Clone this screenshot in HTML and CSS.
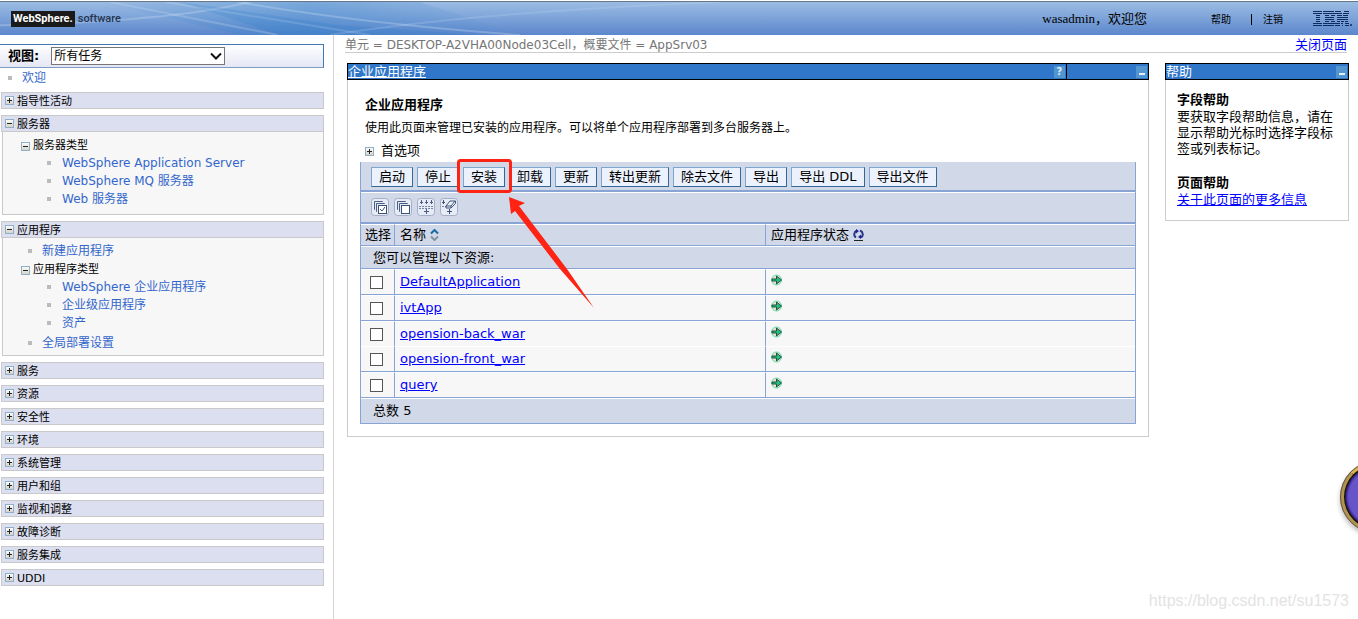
FILE: index.html
```html
<!DOCTYPE html>
<html lang="zh-CN">
<head>
<meta charset="utf-8">
<title>企业应用程序</title>
<link rel="stylesheet" href="styles.css">
</head>
<body>
<svg class="defs" width="0" height="0" aria-hidden="true">
  <defs>
    <linearGradient id="tile" x1="0" y1="0" x2="0" y2="1"><stop offset="0" stop-color="#fff"/><stop offset="1" stop-color="#d5d0c4"/></linearGradient>
    <symbol id="plus" viewBox="0 0 9 9"><rect x=".5" y=".5" width="8" height="8" fill="url(#tile)" stroke="#8fb0c9"/><path d="M2 4.5h5M4.5 2v5" stroke="#222"/></symbol>
    <symbol id="minus" viewBox="0 0 9 9"><rect x=".5" y=".5" width="8" height="8" fill="url(#tile)" stroke="#8fb0c9"/><path d="M2 4.5h5" stroke="#222"/></symbol>
    <symbol id="started" viewBox="0 0 12 12"><circle cx="5.500" cy="6" r="5" fill="#f0dccf" stroke="#5fe0ae"/><path d="M1 5h4.500V2L10.500 6 5.500 10V7H1z" fill="#25bd85" stroke="#23543f"/></symbol>
    <symbol id="frame" viewBox="0 0 18 18"><rect x=".5" y=".5" width="17" height="17" rx="3" fill="#e6ebf5" stroke="#a3afc6"/></symbol>
    <linearGradient id="sweep" x1="0" x2="1"><stop offset="0" stop-color="#2a7cc8" stop-opacity="0"/><stop offset=".5" stop-color="#2a7cc8" stop-opacity=".3"/><stop offset="1" stop-color="#2a7cc8" stop-opacity="0"/></linearGradient>
  </defs>
</svg>

<header class="banner">
  <svg class="banner-art" viewBox="0 0 1358 34" preserveAspectRatio="none" aria-hidden="true">
    <path d="M100 0H420L520 34H240z" fill="url(#sweep)"/>
    <path d="M110 0 278 34M165 0 370 34" stroke="#cfe0f4" stroke-width="2" opacity=".25"/>
    <path d="M0 24Q170 20 250 0" stroke="#cfe0f4" stroke-width="2" fill="none" opacity=".3"/>
    <path d="M180 0 340 24 480 34H280z" fill="#1f78c8" opacity=".18"/>
    <path d="M238 0Q360 22 520 34" stroke="#cfe0f4" stroke-width="2" fill="none" opacity=".3"/>
    <path d="M330 34Q480 10 720 0" stroke="#cfe0f4" stroke-width="2" fill="none" opacity=".2"/>
  </svg>
  <div class="brand"><span class="brand-box">WebSphere.</span><span class="brand-sub">software</span></div>
  <div class="session">
    <span class="welcome">wasadmin，欢迎您</span>
    <a class="top-link" href="#">帮助</a><span class="bar"></span><a class="top-link" href="#">注销</a>
    <svg class="ibm" width="39" height="16" viewBox="0 0 39 16" role="img" aria-label="IBM">
      <g stroke="#0c2c60" stroke-width="1">
        <path d="M0 .5h9M10 .5h11M22 .5h6M31 .5h5"/>
        <path d="M0 2.500h9M10 2.500h12M22 2.500h7M30 2.500h6"/>
        <path d="M3 4.500h4M12 4.500h4M18 4.500h4M24 4.500h5M30 4.500h5"/>
        <path d="M3 6.500h4M12 6.500h9M24 6.500h11"/>
        <path d="M3 8.500h4M12 8.500h9M24 8.500h11"/>
        <path d="M3 10.500h4M12 10.500h4M18 10.500h4M24 10.500h3M28 10.500h3M32 10.500h3"/>
        <path d="M0 12.500h9M10 12.500h12M22 12.500h5M28 12.500h2M32 12.500h4"/>
        <path d="M0 14.500h9M10 14.500h11M22 14.500h5M29 14.500h1M32 14.500h4"/>
      </g>
      <circle cx="38" cy="14" r="1" fill="#0c2c60"/>
    </svg>
  </div>
</header>

<div class="layout">
  <nav class="sidebar">
    <div class="view">
      <label for="view">视图:</label>
      <span class="select-wrap"><select id="view"><option>所有任务</option></select><svg class="chevron" width="12" height="8" viewBox="0 0 12 8"><path d="M1 1.500 6 6.500 11 1.500" fill="none" stroke="#111" stroke-width="2"/></svg></span>
    </div>
    <a class="item top" href="#">欢迎</a>
    <div class="groups">
      <section><h2><svg><use href="#plus"/></svg>指导性活动</h2></section>
      <section><h2><svg><use href="#minus"/></svg>服务器</h2>
        <div class="tree servers">
          <div class="branch"><svg><use href="#minus"/></svg>服务器类型</div>
          <a class="item leaf" href="#">WebSphere Application Server</a>
          <a class="item leaf" href="#">WebSphere MQ 服务器</a>
          <a class="item leaf" href="#">Web 服务器</a>
        </div>
      </section>
      <section><h2><svg><use href="#minus"/></svg>应用程序</h2>
        <div class="tree apps">
          <a class="item twig" href="#">新建应用程序</a>
          <div class="branch"><svg><use href="#minus"/></svg>应用程序类型</div>
          <a class="item leaf" href="#">WebSphere 企业应用程序</a>
          <a class="item leaf" href="#">企业级应用程序</a>
          <a class="item leaf" href="#">资产</a>
          <a class="item twig last" href="#">全局部署设置</a>
        </div>
      </section>
      <section><h2><svg><use href="#plus"/></svg>服务</h2></section>
      <section><h2><svg><use href="#plus"/></svg>资源</h2></section>
      <section><h2><svg><use href="#plus"/></svg>安全性</h2></section>
      <section><h2><svg><use href="#plus"/></svg>环境</h2></section>
      <section><h2><svg><use href="#plus"/></svg>系统管理</h2></section>
      <section><h2><svg><use href="#plus"/></svg>用户和组</h2></section>
      <section><h2><svg><use href="#plus"/></svg>监视和调整</h2></section>
      <section><h2><svg><use href="#plus"/></svg>故障诊断</h2></section>
      <section><h2><svg><use href="#plus"/></svg>服务集成</h2></section>
      <section><h2><svg><use href="#plus"/></svg>UDDI</h2></section>
    </div>
  </nav>

  <main class="content">
    <div class="crumb"><span>单元 = DESKTOP-A2VHA00Node03Cell，概要文件 = AppSrv03</span><a href="#">关闭页面</a></div>
    <div class="columns">
      <section class="portlet">
        <div class="bar-title"><a href="#">企业应用程序</a><button class="chip help" type="button" aria-label="帮助">?</button><span class="split"></span><button class="chip" type="button" aria-label="最小化"><i></i></button></div>
        <div class="portlet-body">
          <h1>企业应用程序</h1>
          <p class="intro">使用此页面来管理已安装的应用程序。可以将单个应用程序部署到多台服务器上。</p>
          <div class="prefs"><svg><use href="#plus"/></svg>首选项</div>
          <div class="grid-box">
            <div class="actions">
              <button type="button">启动</button><button type="button">停止</button>
              <span class="marked"><button type="button">安装</button>
                <svg class="mark" width="140" height="152" viewBox="0 0 140 152" aria-hidden="true">
                  <path d="M52 38 68 44 62 47 110 110 137 149 103 110 58 52 54 55z" fill="#ff2314"/>
                  <rect x="1.500" y="1.500" width="52" height="31" rx="2" fill="none" stroke="#ff2314" stroke-width="3"/>
                </svg></span>
              <button type="button">卸载</button><button type="button">更新</button><button type="button">转出更新</button><button type="button">除去文件</button><button type="button">导出</button><button type="button">导出 DDL</button><button type="button">导出文件</button>
            </div>
            <div class="tools">
              <button type="button" aria-label="全部选中"><svg viewBox="0 0 18 18"><use href="#frame"/><path d="M4 11.500H3.500V3.500h8V4M6 13.500H5.500V5.500h8V6" fill="none" stroke="#4b5d80"/><rect x="7.500" y="7.500" width="8" height="8" fill="#fff" stroke="#3d5076"/><path d="M9 11l2 2 3-4" fill="none" stroke="#3d5076"/></svg></button>
              <button type="button" aria-label="全部取消选中"><svg viewBox="0 0 18 18"><use href="#frame"/><path d="M4 11.500H3.500V3.500h8V4M6 13.500H5.500V5.500h8V6" fill="none" stroke="#4b5d80"/><rect x="7.500" y="7.500" width="8" height="8" fill="#fff" stroke="#3d5076"/></svg></button>
              <button type="button" aria-label="显示过滤器"><svg viewBox="0 0 18 18"><use href="#frame"/><path d="M4.500 2v4M9.500 2v4M14.500 2v4M9.500 11v5M3 4.500h3M8 4.500h3M13 4.500h3M7 13.500h5" stroke="#4b5d80"/><path d="M2 8.500h14M2 10.500h14" stroke="#7587a5" stroke-dasharray="2 1"/></svg></button>
              <button type="button" aria-label="清除过滤器"><svg viewBox="0 0 18 18"><use href="#frame"/><path d="M3.500 2v4M2 4.500h3M9.500 11v5M7 13.500h5" stroke="#3d5076"/><path d="M2 8.500h5" stroke="#7587a5" stroke-dasharray="2 1"/><path d="M6 8 10 3h5.500v2.500L11 10H6zM6 8h5l4-5M11 8v2" fill="#f4f6fa" stroke="#3d5076"/></svg></button>
            </div>
            <table>
              <thead>
                <tr><th class="c-sel">选择</th><th class="c-name">名称 <svg width="9" height="12" viewBox="0 0 9 12"><path d="M1 4.500 4.500 1 8 4.500" fill="none" stroke="#1769a0" stroke-width="2"/><path d="M1 7.500 4.500 11 8 7.500" fill="none" stroke="#8292a5" stroke-width="2"/></svg></th><th>应用程序状态 <svg width="11" height="12" viewBox="0 0 11 12"><path d="M4 1.500C.5 3 .5 7 3 8.500M7 1.500C10.500 3 10.500 7 8 8.500" fill="none" stroke="#263585" stroke-width="2"/><path d="M3 0 6 2 3 4.500zM8 5.500 5 8 8 10z" fill="#20209a"/><path d="M1 11.500h9" stroke="#222"/></svg></th></tr>
                <tr class="note"><td colspan="3">您可以管理以下资源:</td></tr>
              </thead>
              <tbody>
                <tr><td><input type="checkbox" aria-label="DefaultApplication"></td><td><a href="#">DefaultApplication</a></td><td><svg class="state"><use href="#started"/></svg></td></tr>
                <tr><td><input type="checkbox" aria-label="ivtApp"></td><td><a href="#">ivtApp</a></td><td><svg class="state"><use href="#started"/></svg></td></tr>
                <tr class="open"><td><input type="checkbox" aria-label="opension-back_war"></td><td><a href="#">opension-back_war</a></td><td><svg class="state"><use href="#started"/></svg></td></tr>
                <tr><td><input type="checkbox" aria-label="opension-front_war"></td><td><a href="#">opension-front_war</a></td><td><svg class="state"><use href="#started"/></svg></td></tr>
                <tr><td><input type="checkbox" aria-label="query"></td><td><a href="#">query</a></td><td><svg class="state"><use href="#started"/></svg></td></tr>
              </tbody>
              <tfoot><tr class="total"><td colspan="3">总数 5</td></tr></tfoot>
            </table>
          </div>
        </div>
      </section>
      <aside class="portlet help-box">
        <div class="bar-title"><span>帮助</span><button class="chip" type="button" aria-label="最小化"><i></i></button></div>
        <div class="help-body">
          <h3>字段帮助</h3>
          <p>要获取字段帮助信息，请在显示帮助光标时选择字段标签或列表标记。</p>
          <h3>页面帮助</h3>
          <a href="#">关于此页面的更多信息</a>
        </div>
      </aside>
    </div>
  </main>
</div>
<div class="orb" aria-hidden="true"></div>
<div class="watermark">https://blog.csdn.net/su1573</div>
</body>
</html>
```
FILE: styles.css
```css
* { box-sizing: border-box; }
body {
  margin: 0;
  min-height: 100vh;
  position: relative;
  overflow: hidden;
  background: #fff;
  color: #000;
  font: 13px/16px "DejaVu Sans", "Noto Sans CJK SC", sans-serif;
}
h1, h2, h3, p { margin: 0; font-size: 13px; }
button { font: inherit; color: inherit; margin: 0; }
a { color: #00f; }
.defs { position: absolute; }

.banner {
  position: relative;
  display: flex;
  align-items: center;
  justify-content: space-between;
  height: 35px;
  padding: 2px 6px 0 11px;
  border-top: 1px solid #fff;
  background: linear-gradient(#66778a 1px, #9bbbe2 1px, #7da3d9 50%, #5b86cb);
}
.banner-art { position: absolute; inset: 1px 0 0; width: 100%; height: 33px; }
.brand, .session { position: relative; display: flex; align-items: center; }
.brand { font: bold 11px/16px Roboto, sans-serif; gap: 3px; }
.brand-box { padding: 0 2px; background: #1a1a1a; color: #fff; }
.brand-sub { font-weight: 500; color: #26364f; }
.welcome { font: 13px/16px "Liberation Serif", "Noto Sans CJK SC", serif; margin-right: 64px; }
.top-link { color: #000; text-decoration: none; font-size: 10px; line-height: 18px; padding-top: 2px; }
.bar { width: 1px; height: 11px; margin: 0 11px 0 20px; background: #000; }
.ibm { margin-left: 30px; }

.layout { display: flex; min-height: calc(100vh - 35px); }
.sidebar { flex: 0 0 334px; padding: 9px 9px 0 0; border-right: 1px solid #d4d4d4; }
.view {
  display: flex;
  align-items: center;
  height: 24px;
  padding-left: 8px;
  gap: 12px;
  border: 1px solid #3f78b8;
  border-left: 0;
  border-bottom-color: #7f9cc4;
  background: linear-gradient(#fff, #e4e6f4);
}
.view label { font-weight: bold; }
.select-wrap { position: relative; display: flex; }
.view select {
  appearance: none;
  width: 174px;
  height: 18px;
  padding: 0 2px;
  border: 1px solid #767676;
  border-radius: 0;
  background: #fff;
  font: 12px/16px "DejaVu Sans", "Noto Sans CJK SC", sans-serif;
}
.chevron { position: absolute; right: 3px; top: 5px; pointer-events: none; }
.item {
  display: flex;
  align-items: center;
  height: 18px;
  color: #36c;
  font-size: 12px;
  text-decoration: none;
}
.item::before { content: ""; width: 4px; height: 4px; background: #bbb; flex: none; }
.item.top { padding-left: 8px; gap: 10px; height: 20px; }
.item.leaf { padding-left: 44px; gap: 11px; }
.item.twig { padding-left: 25px; gap: 10px; }
.groups { display: flex; flex-direction: column; gap: 6px; padding: 4px 0 0 1px; }
.groups h2 {
  display: flex;
  align-items: center;
  height: 17px;
  padding: 2px 0 0 3px;
  border: 1px solid #c9c9cb;
  background: #dcdfef;
  font-size: 11px;
  font-weight: normal;
}
.groups svg, .prefs svg { width: 9px; height: 9px; flex: none; }
.groups h2 svg { margin-bottom: 3px; }
.groups h2, .branch { gap: 3px; }
.tree { margin-left: 1px; border: 1px solid #c9c9cb; border-top: 0; background: #f7f7f7; }
.servers { padding: 6px 0; }
.apps { padding: 4px 0 1px; }
.branch { display: flex; align-items: center; height: 16px; padding-left: 18px; font-size: 11px; }
.twig + .branch { height: 18px; padding-top: 2px; }
.item.last { height: 22px; }

.content { flex: 1; min-width: 0; padding: 2px 9px 0 13px; }
.crumb {
  display: flex;
  justify-content: space-between;
  height: 16px;
  margin: 0 2px 0 -2px;
  border-bottom: 1px solid #ccc;
  color: #767676;
  font-size: 12px;
}
.crumb span { line-height: 17px; }
.crumb a { font-size: 13px; text-decoration: none; }
.columns { display: flex; align-items: flex-start; gap: 16px; padding-top: 10px; }
.portlet { flex: 1; min-width: 0; border: 1px solid #ccc; border-top: 0; }
.help-box { flex: 0 0 184px; }
.bar-title {
  display: flex;
  align-items: center;
  height: 17px;
  margin: 0 -1px;
  padding: 0 1px 0 0;
  border: 1px solid #000;
  background: #3177c9;
  color: #fff;
}
.bar-title > :first-child { flex: 1; color: #fff; }
.chip { width: 11px; height: 12px; padding: 0; border: 0; background: #5295cf; color: #dcecf8; font: bold 10px/12px "DejaVu Sans", sans-serif; }
.chip i { display: block; width: 6px; height: 2px; margin: 5px auto 0; background: #e3f0fa; }
.split { width: 1px; height: 15px; margin: 0 69px 0 1px; background: #000; }
.portlet-body { padding: 16px 12px 12px; }
h1, .intro, .prefs { margin-left: 5px; }
h1 { line-height: 18px; }
.intro { font-size: 12px; line-height: 18px; margin-top: 5px; font-weight: normal; }
.prefs { display: flex; align-items: center; gap: 7px; height: 18px; margin-top: 5px; margin-bottom: 2px; }

.grid-box { border: 1px solid #88a4d4; border-top: 0; background: #d1d8e7; }
.actions, .tools { display: flex; gap: 4px; padding: 5px 10px; border-bottom: 2px solid #88a4d4; }
.actions { height: 30px; }
.actions button {
  display: block;
  height: 20px;
  padding: 0 7px;
  border: 1px solid #7da7cf;
  border-right-color: #336699;
  border-bottom-color: #336699;
  background: #ebf2fd;
  line-height: 18px;
  white-space: nowrap;
}
.marked { position: relative; }
.mark { position: absolute; left: -6px; top: -8px; z-index: 2; pointer-events: none; }
.tools { height: 32px; padding-top: 5px; gap: 5px; border-top: 1px solid #fff; }
.tools button { width: 18px; height: 18px; padding: 0; border: 0; background: none; }
.tools svg { display: block; width: 18px; height: 18px; }
table { width: 100%; border-collapse: separate; border-spacing: 0; table-layout: fixed; }
th, td {
  height: 26px;
  padding: 0 5px;
  border-top: 1px solid #fff;
  border-bottom: 1px solid #88a4d4;
  text-align: left;
  font-weight: normal;
  line-height: 16px;
}
th { height: 22px; }
th svg { vertical-align: -2px; }
.c-sel { width: 34px; padding: 0 0 0 4px; }
.c-name { width: 371px; }
th:not(:last-child), tbody td:not(:last-child) { border-right: 1px solid #88a4d4; }
.note td { height: 23px; padding-left: 12px; }
tbody td { background: #f7f7f7; font-size: 13px; }
tbody td:first-child { padding-left: 9px; }
tbody .open td { border-bottom: 0; height: 25px; }
.state { display: block; width: 12px; height: 12px; margin-bottom: 5px; }
input[type="checkbox"] { appearance: none; display: block; width: 13px; height: 13px; margin: 0; border: 1px solid #555; background: #fff; }
.total td { height: 25px; padding-left: 12px; border-bottom: 0; }

.help-body { padding: 11px 10px 12px 11px; }
.help-body h3 { line-height: 18px; }
.help-body p + h3 { margin-top: 17px; }
.help-body p { font-weight: normal; }

.orb {
  position: absolute;
  right: -54px;
  top: 461px;
  width: 72px;
  height: 72px;
  border: 4px solid #b4944c;
  border-top-color: #dcb450;
  border-radius: 50%;
  outline: 1px solid #555;
  outline-offset: -1px;
  background: radial-gradient(circle, #6654c8 60%, #5138b4 64%, #111 69%);
  box-shadow: 0 3px 5px #bbb;
}
.watermark {
  position: absolute;
  right: 9px;
  bottom: 9px;
  color: #e3e3e3;
  font: 16px/18px "Liberation Sans", sans-serif;
}
```
